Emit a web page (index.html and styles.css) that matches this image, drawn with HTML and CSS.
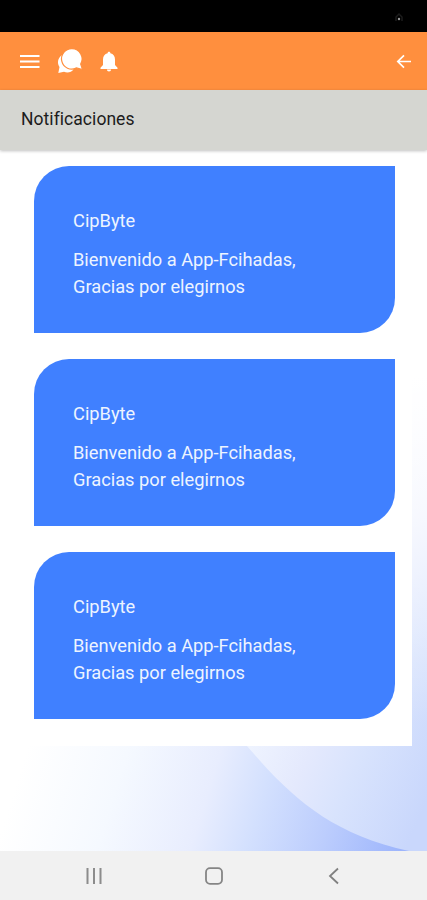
FILE: index.html
```html
<!DOCTYPE html>
<html lang="es">
<head>
    <meta charset="UTF-8">
    <meta name="viewport" content="width=device-width, initial-scale=1.0">
    <link rel="stylesheet" href="styles.css">
    <title>Notificaciones</title>
</head>
<body>
    <div class="status-bar">
        <svg width="12" height="12" viewBox="0 0 12 12">
            <path d="M3 9V5l3-3 3 3v4" fill="none" stroke="#1c1c1c" stroke-width="1.5"/>
            <circle cx="6" cy="7" r="1.2" fill="#999"/>
        </svg>
    </div>

    <header class="toolbar">
        <svg class="icon-menu" width="20" height="15" viewBox="0 0 20 15">
            <path d="M0 2h19.5M0 7.5h19.5M0 13h19.5" stroke="#fff" stroke-width="2.2"/>
        </svg>
        <svg class="icon-chat" width="26" height="26" viewBox="0 0 26 26">
            <path d="M5 6C.5 9 0 14.500 2.500 18L1.300 24L7 22.700C10.500 24.200 14.500 23.200 16.500 20.500Z" fill="#fff"/>
            <path d="M15-.3a10.200 10.200 0 1 0 4.500 19.200L25.500 20.500l-1.800-5.500A10.200 10.200 0 0 0 15-.3z" fill="#fff" stroke="#ff8f3e" stroke-width="1.200"/>
        </svg>
        <svg class="icon-bell" width="18" height="22" viewBox="0 0 18 22">
            <path d="M9 .8c-.9 0-1.400.600-1.400 1.500C4.600 3 3 5.500 3 8.500V14L.5 16.800V18h17v-1.200L15 14V8.500c0-3-1.600-5.500-4.600-6.200C10.400 1.400 9.900.8 9 .8zM6.900 18.500a2.100 2.100 0 0 0 4.200 0z" fill="#fff"/>
        </svg>
        <svg class="icon-back" width="16" height="16" viewBox="0 0 16 16">
            <path d="M15 7.500H2M8 1.300L1.800 7.500L8 13.700" fill="none" stroke="#fff" stroke-width="1.700"/>
        </svg>
    </header>

    <div class="page-title">
        <h1>Notificaciones</h1>
    </div>

    <main class="content">
        <!-- Fondo con la onda azul -->
        <svg class="wave" viewBox="0 0 427 700" preserveAspectRatio="none">
            <defs>
                <linearGradient id="left" gradientUnits="userSpaceOnUse" x1="20" y1="620" x2="390" y2="735">
                    <stop offset="0" stop-color="#ffffff"/>
                    <stop offset=".25" stop-color="#f5f9ff"/>
                    <stop offset=".48" stop-color="#e8edfe"/>
                    <stop offset=".62" stop-color="#d3e0fe"/>
                    <stop offset=".8" stop-color="#bccdfd"/>
                    <stop offset="1" stop-color="#9db5fc"/>
                </linearGradient>
                <linearGradient id="right" gradientUnits="userSpaceOnUse" x1="250" y1="570" x2="427" y2="650">
                    <stop offset="0" stop-color="#f0f5ff"/>
                    <stop offset=".35" stop-color="#e4e9fd"/>
                    <stop offset=".6" stop-color="#d8e3fd"/>
                    <stop offset="1" stop-color="#c9d7fc"/>
                </linearGradient>
                <linearGradient id="fade" x1="0" y1="0" x2="0" y2="1">
                    <stop offset=".32" stop-color="#fff"/>
                    <stop offset=".52" stop-color="#fff" stop-opacity=".7"/>
                    <stop offset=".82" stop-color="#fff" stop-opacity="0"/>
                </linearGradient>
            </defs>
            <rect width="427" height="700" fill="url(#left)"/>
            <path d="M240 0V587C285 640 325 682 409 700H427V0z" fill="url(#right)"/>
            <rect width="427" height="700" fill="url(#fade)"/>
        </svg>
        <section class="notifications">
            <article class="card">
                <h2>CipByte</h2>
                <p>Bienvenido a App-Fcihadas,<br>Gracias por elegirnos</p>
            </article>
            <article class="card">
                <h2>CipByte</h2>
                <p>Bienvenido a App-Fcihadas,<br>Gracias por elegirnos</p>
            </article>
            <article class="card">
                <h2>CipByte</h2>
                <p>Bienvenido a App-Fcihadas,<br>Gracias por elegirnos</p>
            </article>
        </section>
    </main>

    <nav class="system-nav">
        <svg width="18" height="18" viewBox="0 0 18 18">
            <path d="M2.500 1v16M9 1v16M15.500 1v16" stroke="#8c8c8c" stroke-width="2"/>
        </svg>
        <svg width="18" height="18" viewBox="0 0 18 18">
            <rect x="1" y="1.200" width="16" height="15.600" rx="4" fill="none" stroke="#858585" stroke-width="1.800"/>
        </svg>
        <svg width="18" height="18" viewBox="0 0 18 18">
            <path d="M13 1.500L5 9l8 7.500" fill="none" stroke="#808080" stroke-width="1.800"/>
        </svg>
    </nav>
</body>
</html>
```
FILE: styles.css
```css
* {
    box-sizing: border-box;
}

body {
    display: flex;
    flex-direction: column;
    height: 100vh;
    margin: 0;
    overflow: hidden;
    background-color: #fff;
    font-family: Roboto, sans-serif;
}

svg {
    display: block;
    flex: none;
}

.status-bar {
    display: flex;
    justify-content: flex-end;
    height: 32px;
    padding: 12px 22px 0 0;
    background-color: #000;
}

/* Barra superior */
.toolbar {
    display: flex;
    align-items: center;
    height: 58px;
    padding: 1px 15px 0 20px;
    background-color: #ff8f3e;
}

.icon-chat {
    margin-left: 17px;
    overflow: visible;
}

.icon-bell {
    margin-left: 17px;
}

.icon-back {
    margin-left: auto;
}

.page-title {
    position: relative;
    z-index: 1;
    height: 60px;
    padding: 17px 21px 0;
    background-color: #d5d6d1;
    box-shadow: 0 1px 3px rgba(0, 0, 0, 0.25);
}

.page-title h1 {
    margin: 0;
    color: #1c1c1c;
    font-size: 17.5px;
    font-weight: 400;
    line-height: 24px;
    letter-spacing: 0.05px;
}

.content {
    position: relative;
    flex: 1;
}

.wave {
    position: absolute;
    top: 0;
    left: 0;
    width: 100%;
    height: 100%;
}

/* Lista de notificaciones */
.notifications {
    position: relative;
    display: flex;
    flex-direction: column;
    gap: 26.2px;
    width: 412px;
    padding: 15.6px 17px 27px 34px;
    background-color: #fff;
}

.card {
    height: 167px;
    padding: 41px 39px 0;
    background-color: #4080ff;
    border-radius: 35px 0;
    color: #edf4ff;
}

.card h2 {
    margin: 0 0 12px;
    font-size: 18.25px;
    font-weight: 400;
    line-height: 27px;
}

.card p {
    margin: 0;
    font-size: 18.25px;
    line-height: 27px;
}

/* Botones del sistema */
.system-nav {
    display: flex;
    align-items: center;
    justify-content: space-between;
    height: 49px;
    padding: 0 84px 0 85px;
    background-color: #f1f1f1;
}
```
